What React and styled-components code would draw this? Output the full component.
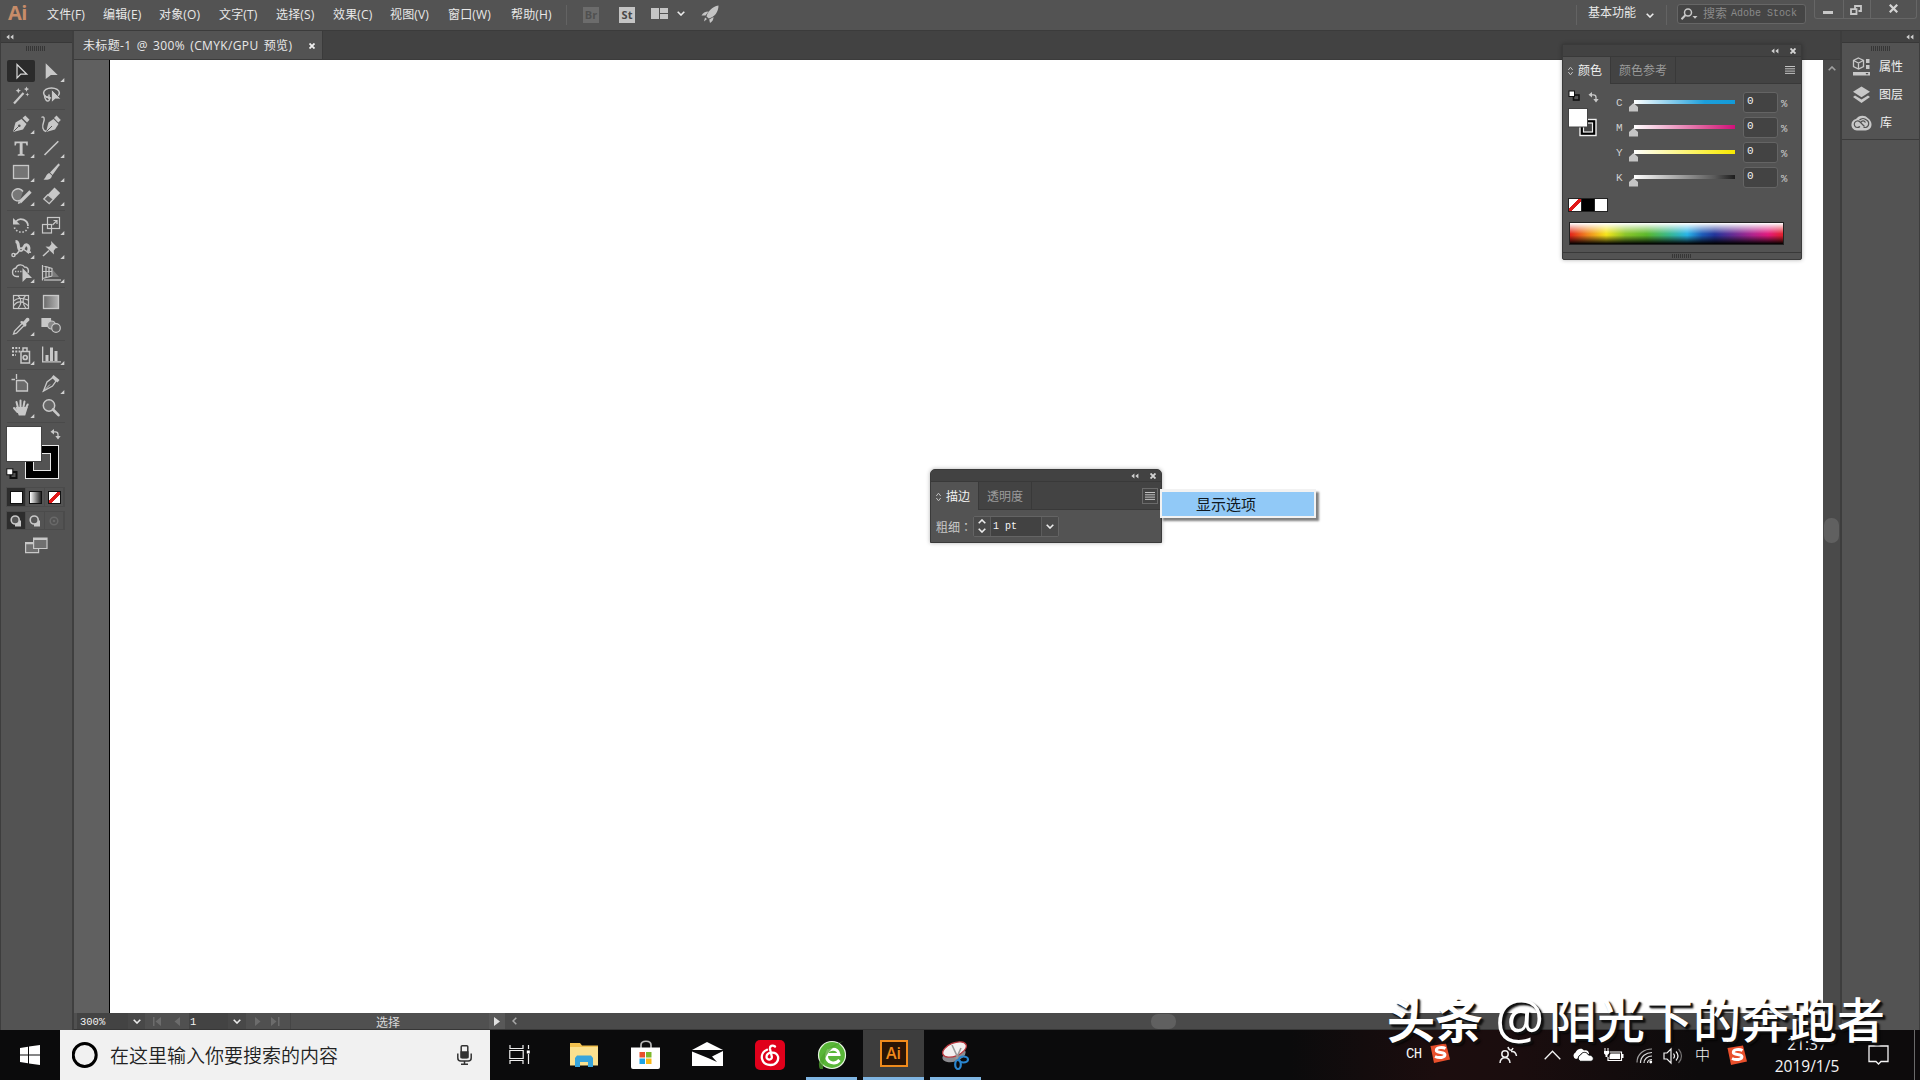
import React from "react";
import styled, { createGlobalStyle } from "styled-components";

const UI = '"Open Sans", "Noto Sans CJK SC", sans-serif';
const MONO = '"Liberation Mono", "Noto Sans CJK SC", monospace';

const Global = createGlobalStyle`
  * { box-sizing: border-box; }
  body { margin: 0; background: #424242; overflow: hidden; }
  svg { display: block; flex: none; }
`;

const Screen = styled.div`
  position: relative;
  width: 1920px;
  height: 1080px;
  display: flex;
  flex-direction: column;
  overflow: hidden;
  font: 12px/16px ${UI};
  color: #e8e8e8;
  background: #424242;
  white-space: nowrap;
`;

/* ---------- menu bar ---------- */
const MenuBar = styled.header`
  height: 31px;
  flex: none;
  display: flex;
  align-items: flex-start;
  background: #535353;
  border-bottom: 1px solid #3b3b3b;
`;
const AiLogo = styled.div`
  width: 47px;
  padding: 1px 0 0 8px;
  font: 700 20px/24px "Open Sans", sans-serif;
  color: #c78c69;
  letter-spacing: -0.6px;
`;
const MenuItem = styled.div`
  width: ${(p) => p.$w}px;
  padding-top: 7px;
  letter-spacing: 0.15px;
`;
const BarLine = styled.div`
  width: 1px;
  height: 20px;
  margin-top: 5px;
  background: #636363;
`;
const AppBadge = styled.div`
  width: 16px;
  height: 16px;
  margin: 7px 0 0 ${(p) => p.$left}px;
  background: ${(p) => (p.$dim ? "#6c6c6c" : "#c4c4c4")};
  color: ${(p) => (p.$dim ? "#505050" : "#484848")};
  font: 700 11px/16px "Open Sans", sans-serif;
  text-align: center;
`;
const BarIcon = styled.div`
  margin: ${(p) => p.$top}px 0 0 ${(p) => p.$left}px;
`;
const Workspace = styled.div`
  margin-left: auto;
  display: flex;
`;
const WorkspaceName = styled.div`
  padding: 5px 0 0 11px;
  width: 69px;
`;
const StockSearch = styled.div`
  display: flex;
  align-items: center;
  width: 129px;
  height: 20px;
  margin: 4px 8px 0 10px;
  padding-left: 3px;
  gap: 5px;
  background: #454545;
  border: 1px solid #666;
  border-radius: 3px;
  font: 10px/14px ${MONO};
  color: #8a8a8a;
`;
const StockText = styled.span`
  display: flex;
  align-items: center;
  gap: 4px;
  b { font: 12px/16px ${UI}; }
`;
const WinButtons = styled.div`
  display: flex;
  width: 103px;
  height: 19px;
  margin-right: 3px;
  border: 1px solid #666;
  border-top: 0;
  border-radius: 0 0 3px 3px;
`;
const WinButton = styled.div`
  width: ${(p) => p.$w}px;
  border-left: ${(p) => (p.$first ? 0 : 1)}px solid #666;
`;

/* ---------- main area ---------- */
const Main = styled.div`
  flex: 1;
  display: flex;
  min-height: 0;
`;
const Toolbox = styled.aside`
  width: 74px;
  display: flex;
  flex-direction: column;
  background: #535353;
  border-left: 1px solid #3d3d3d;
  border-right: 2px solid #3f3f3f;
`;
const DockHead = styled.div`
  height: 12px;
  flex: none;
  display: flex;
  align-items: center;
  justify-content: ${(p) => (p.$right ? "flex-end" : "flex-start")};
  padding: 0 5px 0 5px;
  background: #424242;
  border-bottom: 1px solid #383838;
`;
const Grip = styled.div`
  width: 20px;
  height: ${(p) => p.$h || 5}px;
  margin: ${(p) => p.$m};
  flex: none;
  background: repeating-linear-gradient(90deg, #363636 0 1px, #535353 1px 2px);
`;
const ToolGroup = styled.div`
  display: grid;
  grid-template-columns: 30px 30px;
  grid-auto-rows: 24px;
  margin-left: 5px;
  padding-bottom: ${(p) => p.$pad}px;
  background: linear-gradient(#4a4a4a, #4a4a4a) 1px calc(100% - 2px) / 58px 1px no-repeat;
`;
const FillStrokeWrap = styled.div`
  margin-left: 4px;
`;
const ModeRow = styled.div`
  display: flex;
  width: 59px;
  height: ${(p) => p.$h}px;
  margin: ${(p) => p.$top}px 0 0 5px;
  border: 1px solid #4b4b4b;
`;
const ModeCell = styled.div`
  flex: 1;
  display: flex;
  align-items: center;
  justify-content: center;
  background: ${(p) => (p.$on ? "#2d2d2d" : "transparent")};
  border-right: 1px solid #4b4b4b;
`;
const ModeSwatch = styled.div`
  width: 13px;
  height: 13px;
  border: 1px solid #111;
  background: ${(p) => p.$bg};
`;
const ScreenMode = styled.div`
  margin: 7px 0 0 24px;
`;

const Doc = styled.section`
  flex: 1;
  display: flex;
  flex-direction: column;
  min-width: 0;
`;
const TabBar = styled.div`
  height: 29px;
  flex: none;
  background: #424242;
  border-bottom: 1px solid #3b3b3b;
`;
const Tab = styled.div`
  display: flex;
  align-items: center;
  width: 249px;
  height: 28px;
  padding: 1px 7px 0 9px;
  justify-content: space-between;
  background: #535353;
  border-right: 1px solid #3b3b3b;
  letter-spacing: 0.35px;
  word-spacing: 1.8px;
`;
const CanvasRow = styled.div`
  flex: 1;
  display: flex;
`;
const Pasteboard = styled.div`
  width: 36px;
  background: #606060;
  border-right: 1px solid #000;
`;
const Artboard = styled.div`
  flex: 1;
  background: #fff;
`;
const VScroll = styled.div`
  width: 17px;
  display: flex;
  flex-direction: column;
  align-items: center;
  padding-top: 6px;
  background: #4a4a4a;
`;
const Thumb = styled.div`
  width: ${(p) => p.$w}px;
  height: ${(p) => p.$h}px;
  border-radius: 7px;
  background: #606060;
  margin: ${(p) => p.$m};
`;
const StatusBar = styled.footer`
  height: 17px;
  flex: none;
  display: flex;
  align-items: center;
  background: #505050;
  border-bottom: 1px solid #363636;
  font: 10px/16px ${MONO};
`;
const StatusField = styled.div`
  width: ${(p) => p.$w}px;
  height: 16px;
  padding-left: ${(p) => p.$pad}px;
  background: #434343;
  color: #f2f2f2;
  font: 10.5px/18px "Liberation Mono", monospace;
`;
const StatusCell = styled.div`
  width: ${(p) => p.$w}px;
  height: 16px;
  display: flex;
  align-items: center;
  justify-content: center;
  background: ${(p) => p.$bg || "transparent"};
`;
const StatusLabel = styled.div`
  width: 199px;
  padding: 4px 0 0 85px;
  height: 16px;
  border-left: 1px solid #464646;
  font: 12px/12px ${UI};
  color: #d8d8d8;
`;
const HScroll = styled.div`
  flex: 1;
  height: 16px;
  display: flex;
  align-items: center;
  padding-left: 7px;
  background: #4a4a4a;
`;

/* ---------- right dock ---------- */
const Dock = styled.aside`
  width: 80px;
  background: #535353;
  border-left: 2px solid #3d3d3d;
  border-right: 1px solid #3d3d3d;
`;
const DockItems = styled.div`
  height: 97px;
  padding-top: 3px;
  border-bottom: 1px solid #3b3b3b;
`;
const DockItem = styled.div`
  height: 28px;
  display: flex;
  align-items: center;
  gap: 8px;
  padding-left: 9px;
  color: #f0f0f0;
`;

/* ---------- floating panels ---------- */
const Panel = styled.section`
  position: absolute;
  left: ${(p) => p.$x}px;
  top: ${(p) => p.$y}px;
  width: ${(p) => p.$w}px;
  height: ${(p) => p.$h}px;
  display: flex;
  flex-direction: column;
  background: #535353;
  border: 1px solid #3a3a3a;
  border-radius: ${(p) => p.$r || "2px"};
  box-shadow: 0 0 4px rgba(0, 0, 0, 0.3);
  overflow: hidden;
`;
const PanelHead = styled.div`
  height: 12px;
  flex: none;
  display: flex;
  align-items: center;
  justify-content: flex-end;
  gap: 11px;
  padding: 1px 5px 0 0;
  background: #424242;
  border-bottom: 1px solid #393939;
`;
const PanelTabs = styled.div`
  height: ${(p) => p.$h}px;
  flex: none;
  display: flex;
  background: #434343;
`;
const PanelTab = styled.div`
  display: flex;
  align-items: center;
  width: ${(p) => p.$w}px;
  padding: ${(p) => (p.$on ? 1 : 2)}px 0 0 ${(p) => (p.$on ? 5 : 8)}px;
  gap: 5px;
  background: ${(p) => (p.$on ? "#535353" : "transparent")};
  color: ${(p) => (p.$on ? "#f0f0f0" : "#9b9b9b")};
  border-right: 1px solid #393939;
  border-bottom: ${(p) => (p.$on ? 0 : 1)}px solid #393939;
`;
const PanelMenu = styled.div`
  flex: 1;
  display: flex;
  align-items: center;
  justify-content: flex-end;
  padding-right: ${(p) => p.$pad}px;
  border-bottom: 1px solid #393939;
`;
const MenuBox = styled.div`
  padding: 3px 2px;
  border: 1px solid #6a6a6a;
`;
const ColorBody = styled.div`
  height: 112px;
  display: flex;
  padding: 5px 0 0 5px;
`;
const Sliders = styled.div`
  display: flex;
  flex-direction: column;
  margin-left: 13px;
  padding-top: 1px;
`;
const SliderRow = styled.div`
  height: 25px;
  display: flex;
  align-items: center;
  font: 10.5px/14px "Liberation Mono", monospace;
  color: #d0d0d0;
`;
const SliderLabel = styled.span`
  width: 14px;
  padding: 1px 0 0 1px;
  font-size: 11px;
`;
const Percent = styled.span`
  padding-top: 2px;
`;
const SliderTrack = styled.div`
  width: 107px;
  height: 25px;
  padding: 10px 0 0 5px;
`;
const TrackFill = styled.div`
  width: 101px;
  height: 4px;
  background: ${(p) => p.$bg};
`;
const TrackKnob = styled.svg`
  margin: -1px 0 0 -5px;
`;
const NumberBox = styled.div`
  width: 35px;
  height: 21px;
  margin: 0 3px 0 7px;
  padding: 1px 0 0 3px;
  background: #434343;
  border: 1px solid #646464;
  border-radius: 3px;
  font: 11px/14px "Liberation Mono", monospace;
  color: #f2f2f2;
`;
const QuickSwatches = styled.div`
  display: flex;
  width: 40px;
  height: 14px;
  margin: 2px 0 10px 5px;
  border: 1px solid #222;
`;
const QuickSwatch = styled.div`
  flex: 1;
  border-right: 1px solid #222;
  background: ${(p) => p.$bg};
  &:last-child { border-right: 0; }
`;
const Spectrum = styled.div`
  width: 215px;
  height: 23px;
  margin-left: 6px;
  border: 1px solid #222;
  background:
    linear-gradient(180deg, #fff 0%, rgba(255, 255, 255, 0.6) 20%, rgba(255, 255, 255, 0) 52%, rgba(0, 0, 0, 0) 58%, rgba(0, 0, 0, 0.5) 80%, #000 100%),
    linear-gradient(90deg, #e2231a 0%, #f0861f 8%, #f5e51b 17%, #8cc62a 26%, #5cb92c 36%, #3ab88a 46%, #28b4e8 55%, #1d5cb8 62%, #23349a 68%, #6a2c94 77%, #b2248e 86%, #e3197c 93%, #e3202b 100%);
`;
const PanelFoot = styled.div`
  margin-top: auto;
  height: 7px;
  border-top: 1px solid #393939;
  display: flex;
  justify-content: center;
`;
const StrokeBody = styled.div`
  flex: 1;
  display: flex;
  align-items: center;
  padding-left: 5px;
  color: #c8c8c8;
`;
const StrokeLabel = styled.span`
  padding-top: 2px;
  font-family: "Noto Sans CJK TC", "Noto Sans CJK SC", sans-serif;
`;
const StrokeField = styled.div`
  display: flex;
  width: 86px;
  height: 21px;
  margin-left: 1px;
  border: 1px solid #646464;
  border-radius: 2px;
`;
const SpinBox = styled.div`
  width: ${(p) => p.$w}px;
  display: flex;
  flex-direction: column;
  align-items: center;
  justify-content: center;
  gap: 4px;
  background: #4a4a4a;
`;
const StrokeValue = styled.div`
  width: 52px;
  padding: 2px 0 0 2px;
  background: #424242;
  border: solid #5c5c5c;
  border-width: 0 1px;
  font: 10px/16px "Liberation Mono", monospace;
  color: #f5f5f5;
`;
const Popup = styled.div`
  position: absolute;
  left: 1160px;
  top: 489px;
  width: 156px;
  height: 29px;
  padding: 3px 2px 2px;
  background: #f2f2f2;
  box-shadow: 3px 3px 2px rgba(0, 0, 0, 0.5);
`;
const PopupItem = styled.div`
  height: 24px;
  padding-left: 34px;
  background: #91c9f7;
  color: #101820;
  font: 15px/24px "Noto Sans CJK SC", sans-serif;
`;

/* ---------- task bar ---------- */
const Taskbar = styled.nav`
  height: 50px;
  flex: none;
  display: flex;
  background: linear-gradient(90deg, #0b0b0c 0 1290px, #1c0d0e 1440px, #1a0d0e 1520px, #0d0b0c 1700px);
`;
const TaskCell = styled.div`
  width: ${(p) => p.$w}px;
  height: 50px;
  display: flex;
  justify-content: center;
  padding-top: ${(p) => p.$top || 10}px;
  background: ${(p) => (p.$active ? "#3d3d3d" : "transparent")};
  border-bottom: ${(p) => (p.$run ? 3 : 0)}px solid #7fb5e2;
`;
const Gap = styled.div`
  width: ${(p) => p.$w}px;
  flex: none;
`;
const SearchBox = styled.div`
  width: 430px;
  height: 50px;
  display: flex;
  align-items: center;
  padding-left: 12px;
  background: #f1f1f1;
  color: #222;
  font: 19px/26px "Noto Sans CJK SC", sans-serif;
`;
const SearchText = styled.span`
  width: 359px;
  padding-left: 12px;
  font-weight: 350;
`;
const AiTile = styled.div`
  width: 28px;
  height: 27px;
  border: 2px solid #f08a1c;
  background: #2a1405;
  color: #f08a1c;
  font: 600 16px/22px "Open Sans", sans-serif;
  text-align: center;
`;
const Tray = styled.div`
  margin-left: auto;
  width: 514px;
  display: flex;
  color: #f4f4f4;
`;
const TrayIcon = styled.div`
  width: ${(p) => p.$w}px;
  flex: none;
  padding-top: ${(p) => p.$top}px;
`;
const Lang = styled.div`
  width: 24px;
  padding-top: 15px;
  font: 14px/18px "Liberation Mono", monospace;
  letter-spacing: -0.6px;
`;
const ImeMode = styled.div`
  width: 32px;
  padding-top: 14px;
  font: 300 15px/20px "Noto Sans CJK SC", sans-serif;
`;
const Clock = styled.div`
  width: 107px;
  padding: 3px 15px 0 0;
  text-align: center;
  font: 15.5px/22px "Open Sans", sans-serif;
`;
const Edge = styled.div`
  width: 1px;
  height: 50px;
  margin-left: auto;
  margin-right: 5px;
  background: #6a6a6a;
`;
const Watermark = styled.div`
  position: absolute;
  left: 1387px;
  top: 982px;
  display: flex;
  align-items: baseline;
  color: #fff;
  font: 500 48px/70px "Noto Sans CJK SC", sans-serif;
  text-shadow: 2px 2px 1px #111, 3px 3px 2px rgba(0, 0, 0, 0.7);
`;
const WatermarkBrand = styled.b`
  font-weight: 700;
  margin-right: 11px;
`;
const WatermarkAt = styled.span`
  width: 55px;
  padding-left: 1px;
  font: 400 55px/60px "Open Sans", sans-serif;
`;

/* ---------- small glyphs ---------- */
const Rewind = ({ c = "#cfcfcf" }) => (
  <svg width="8" height="6" viewBox="0 0 8 6" fill={c}><path d="M3.4.4v5.200L.3 3zM7.400.4v5.200L4.300 3z" /></svg>
);
const Cross = ({ s = 6, w = 2, c = "#d4d4d4" }) => (
  <svg width={s} height={s} viewBox="0 0 6 6"><path d="M.5.5l5 5M5.5.5l-5 5" stroke={c} strokeWidth={w} /></svg>
);
const Chevron = ({ w = 8, h = 5, up, c = "#ececec", s = 1.6 }) => (
  <svg width={w} height={h} viewBox="0 0 8 5"><path d={up ? "M.7 4.3L4 1l3.3 3.3" : "M.7.7L4 4 7.3.7"} fill="none" stroke={c} strokeWidth={s} /></svg>
);
const Lines = () => (
  <svg width="10" height="8" viewBox="0 0 10 8"><path d="M0 .5h10M0 2.8h10M0 5.1h10M0 7.4h10" stroke="#c2c2c2" /></svg>
);
const Sort = () => (
  <svg width="5" height="10" viewBox="0 0 5 10"><path d="M.3 4L2.5 1.2 4.7 4M.3 6l2.2 2.8L4.7 6" fill="none" stroke="#c0c0c0" /></svg>
);
const SwapArrows = () => (
  <g fill="none" stroke="#c8c8c8" strokeWidth="1.300"><path d="M2.500 2.800H5Q7.500 2.800 7.500 5.300V8" /><path d="M0 2.800L3.500 0v5.600zM7.500 10.500L4.800 7h5.400z" fill="#c8c8c8" stroke="none" /></g>
);

const G = "#c8c8c8";
const icons = {
  select: <path d="M11 4.500v13.500l3.800-3.800h6z" fill="none" stroke="#d8d8d8" strokeWidth="1.2" />,
  direct: <path d="M9.700 3.300v15.700l5.200-4h6.800z" fill={G} />,
  wand: <g><path d="M8 19.500L17.500 9" stroke={G} strokeWidth="2.2" /><path d="M12.300 4l.8 1.800 1.900.9-1.900.8-.8 1.900-.8-1.900-1.800-.8 1.800-.9zM20.500 2.500l.8 1.800 1.800.8-1.800.8-.8 1.800-.8-1.800-1.800-.8 1.800-.8zM21.300 8.500l.6 1.400 1.400.6-1.400.6-.6 1.300-.5-1.300-1.400-.6 1.400-.6z" fill={G} /></g>,
  lasso: <g fill="none" stroke={G} strokeWidth="1.5"><ellipse cx="15.500" cy="9" rx="7.900" ry="5" /><path d="M8.500 11c0 5 3 7 4.500 5.500s-1-4.500-3-3" /><path d="M13 10.500v4" /><path d="M15.500 5.500v13l3.800-3.500H25z" fill={G} stroke="#535353" strokeWidth=".8" /></g>,
  pen: <g fill={G}><path d="M7 20L9.500 10.500l6-3.500 5 5-3.500 5.500z" /><path d="M16.500 6l2.800-2.500 4.200 4.300-2.500 2.700z" /><path d="M7.500 19.500l5-5" stroke="#535353" /><circle cx="13.300" cy="13.700" r="1.300" fill="#535353" /></g>,
  curve: <g fill={G}><path d="M10 20l2.500-9.500 5-3.500 5 5-3.500 5.500z" /><path d="M18 6l2.500-2.500L24.800 8l-2.500 2.500z" /><path d="M10.500 19.500l5.500-5.500" stroke="#535353" /><path d="M5.500 5.500c2.500-2 3.500 1 2 5s-1 8 2.500 9" fill="none" stroke={G} strokeWidth="1.400" /></g>,
  type: <path d="M8.500 5.500h13.300v4h-1.300l-.7-2.200h-3.200v10.600l2 .6v1.200h-6.900v-1.200l2-.6V7.300h-3.200l-.7 2.200H8.500z" fill={G} />,
  line: <path d="M8.500 19L22.300 5.300" stroke={G} strokeWidth="1.600" />,
  rect: <rect x="7.500" y="5.500" width="15" height="13" fill="#747474" stroke={G} strokeWidth="1.300" />,
  brush: <g fill={G}><path d="M14 12.500L22.500 3.500q1.500.3 1 1.700L16.500 15z" /><path d="M13.200 13l2.800 2.500c-.5 4-4.500 4.800-8.500 4 2.500-1.500 2.500-5.500 5.700-6.500z" /></g>,
  shaper: <g><path d="M17 7.500a6 6 0 1 0-3 9" fill="#777" stroke={G} strokeWidth="1.500" /><path d="M14 18l10.500-10.500" stroke={G} strokeWidth="3.200" /><path d="M11.800 20l.8-3 2.500 2z" fill={G} /></g>,
  eraser: <g><path d="M11.800 10.500L18.500 3.500l5.700 5.500-6.700 7z" fill={G} /><path d="M11.800 10.800l-4 4.200 5.400 4.700 4.200-4.400z" fill="#606060" stroke={G} strokeWidth="1.300" /></g>,
  rotate: <g fill="none" stroke={G} strokeWidth="1.700"><path d="M10 8.500c4-5 12-1.500 12 4.500" /><path d="M22 14c-2 8-13 6-14-1" strokeDasharray="1.500 1.800" /><path d="M7 5v6.500h7z" fill={G} stroke="none" /></g>,
  scale: <g fill="none" stroke={G} strokeWidth="1.200"><rect x="11.500" y="4.500" width="12" height="11" /><rect x="6.500" y="11.500" width="9" height="8.500" /><path d="M16.500 12l4.500-4.500M17.500 7.500H21v3.500" /></g>,
  warp: <g fill="none" stroke={G} strokeWidth="1.400"><path d="M9.500 4.500c5 0 1 8 5 8.500s3-6.500 6.500-5c3 1.500 2 6 .5 8" strokeWidth="3" /><path d="M8 18c5-1 5-5 7-6.500s5 5 10 3.500" /><circle cx="7.500" cy="18" r="1.600" /><circle cx="15" cy="12.500" r="1.500" fill="#535353" /></g>,
  pin: <g fill={G}><path d="M15 4l7 7-2.300.3-2 2.500.3 3.700L9.500 9.500l3.700.2 2.200-2.700z" /><path d="M13 13.500l-6 5.500" stroke={G} strokeWidth="1.500" /></g>,
  builder: <g fill="none" stroke={G} strokeWidth="1.400"><path d="M13 15.500H10.500a4.300 4.300 0 0 1-.5-8.500c1-4 7-4 8.500-1 3.500 0 4.500 3 3.500 6" /><path d="M9 10.500h9" strokeDasharray="1.300 1.300" /><path d="M16.500 7v14l4-4h5.500z" fill={G} stroke="none" /></g>,
  perspective: <g fill="none" stroke={G} strokeWidth="1.200"><path d="M6.500 4v15.500M6.500 4.500L16 7.500v7.500L6.500 17.500M10 5.500v11M13 6.500v9M6.500 10.500H16" /><path d="M8 19h17" /><path d="M17 9v7h6z" fill="#7a7a7a" stroke="none" /></g>,
  mesh: <g fill="none" stroke={G} strokeWidth="1.200"><rect x="7.500" y="5.500" width="15" height="13" /><path d="M7.500 11c5-4 8-3 15-1M7.500 16c4-6 9-5 15 0M12 5.500c4 4 4 8 0 13M19.500 5.500c-3 3-3 8 .5 13" /></g>,
  gradient: <g><defs><linearGradient id="tg"><stop stopColor="#6a6a6a" /><stop offset="1" stopColor="#b4b4b4" /></linearGradient></defs><rect x="7.500" y="5.500" width="15" height="13" fill="url(#tg)" stroke={G} strokeWidth="1.300" /></g>,
  dropper: <g><path d="M16 9.500L8.500 17l-1 3 3-.8L18 11.500" fill="none" stroke={G} strokeWidth="1.300" /><path d="M14 8l1.500-1 2 .500 3-3.500q3-1 3 2.200l-3.300 3.300.3 1.800-1.500 1.700z" fill={G} /></g>,
  blend: <g stroke={G} strokeWidth="1.200"><path d="M6 4.500h8.500v3.500l-3 4.500H6z" fill={G} /><circle cx="15.500" cy="11" r="4" fill="#888" /><circle cx="20" cy="14" r="4.300" fill="#606060" /></g>,
  spray: <g fill="none" stroke={G} strokeWidth="1.500"><rect x="15" y="8.500" width="8.500" height="11.500" /><path d="M17 8.500V5h4v3.500" /><circle cx="19.200" cy="14.500" r="2" strokeWidth="1.700" /><path d="M6 5h8M6 8.500h8M6 12h4" strokeDasharray="2 1.300" strokeWidth="2" /></g>,
  chart: <path d="M6 3.500h1.300v14.700H25v1.300H6zM9.500 12h3v6h-3zM14 4.500h3v13.500h-3zM18.500 8h3v10h-3z" fill={G} />,
  artboard: <g fill="none" stroke={G} strokeWidth="1.300"><path d="M10.500 2v5M5.500 7.500h3.500" /><path d="M10.500 8.500h8l3 3v7.500h-11z" fill="#6a6a6a" /></g>,
  slice: <g><path d="M7.500 19l3.500-9 6-4.500 3 3.500-3.500 5z" fill="none" stroke={G} strokeWidth="1.300" /><path d="M15.500 5.500l2-2.500 6 5-2 2.500z" fill={G} /><path d="M7 19.500l7-7" stroke={G} /></g>,
  hand: <g stroke={G} strokeLinecap="round" fill="none" strokeWidth="2"><path d="M12 12L10.500 6M14.500 11V4.500M17.300 11.500L18.500 5.500M19.500 13l2.200-4.500M11.500 16L8 12" /><path d="M11 12h9.500l-2 6.500h-5z" fill={G} /></g>,
  zoom: <g fill="none" stroke={G}><circle cx="13" cy="9.500" r="5.700" fill="#666" strokeWidth="1.500" /><path d="M17 13.500l5.500 5.700" strokeWidth="2.600" strokeLinecap="round" /></g>,
};
const groups = [
  [["select", 0], ["direct", 1], ["wand", 0], ["lasso", 0]],
  [["pen", 1], ["curve", 0], ["type", 1], ["line", 1], ["rect", 1], ["brush", 1], ["shaper", 1], ["eraser", 1]],
  [["rotate", 1], ["scale", 1], ["warp", 1], ["pin", 1], ["builder", 1], ["perspective", 1]],
  [["mesh", 0], ["gradient", 0], ["dropper", 1], ["blend", 0]],
  [["spray", 1], ["chart", 1]],
  [["artboard", 0], ["slice", 1], ["hand", 1], ["zoom", 0]],
];
const Tool = ({ name, more }) => (
  <svg width="30" height="24" viewBox="0 0 30 24">
    {name === "select" && <rect x="1" y="0" width="28" height="22" rx="2" fill="#2b2b2b" />}
    {icons[name]}
    {more ? <path d="M28.300 18v4h-4z" fill="#d0d0d0" /> : null}
  </svg>
);

const FillStroke = () => (
  <svg width="60" height="56" viewBox="0 0 60 56">
    <rect x="20.500" y="20.500" width="33" height="33" fill="#000" stroke="#e8e8e8" />
    <rect x="28.500" y="28.500" width="17" height="17" fill="#535353" stroke="#e8e8e8" />
    <rect x="1.500" y="1.500" width="35" height="35" fill="#fff" stroke="#444" strokeWidth="1" />
    <g transform="translate(45.500 4)"><SwapArrows /></g>
    <rect x="5.500" y="47" width="6" height="6" fill="none" stroke="#111" strokeWidth="2" />
    <rect x="1.800" y="43.800" width="6" height="6" fill="#fff" stroke="#111" />
  </svg>
);
const ModeGlyph = ({ c, f }) => (
  <svg width="12" height="12" viewBox="0 0 12 12"><rect x="5" y="5.500" width="6" height="6" fill={f} /><circle cx="5.200" cy="5" r="4" fill="#555" stroke={c} strokeWidth="1.600" /></svg>
);
const ModeGlyphOff = () => (
  <svg width="10" height="10" viewBox="0 0 10 10"><circle cx="5" cy="5" r="3.800" fill="none" stroke="#696969" strokeWidth="1.500" /><circle cx="5" cy="5" r="1.300" fill="#696969" /></svg>
);
const ColorPair = () => (
  <svg width="34" height="52" viewBox="0 0 34 52">
    <rect x="5.500" y="6" width="5.500" height="5" fill="none" stroke="#111" strokeWidth="1.600" />
    <rect x="1" y="2" width="5.500" height="5.500" fill="#fff" stroke="#111" />
    <g transform="translate(20.500 3)"><SwapArrows /></g>
    <rect x="12" y="30.500" width="16" height="16" fill="#000" stroke="#f0f0f0" strokeWidth="1.400" />
    <rect x="15.500" y="34" width="9" height="9" fill="#444" stroke="#f0f0f0" strokeWidth="1.200" />
    <rect x="0.500" y="19.500" width="19" height="18.500" fill="#fff" stroke="#444" />
  </svg>
);

const Sogou = () => (
  <svg width="21" height="21" viewBox="0 0 21 21">
    <path d="M.5 3L16 .500l4 16L4 20z" fill="#e9502c" />
    <path d="M15.500 5.600C12.500 3.800 6 4.300 6.300 7.500c.3 2.800 8.700 1.200 8.700 4.300 0 3-6 3.500-10 1.700" fill="none" stroke="#fff" strokeWidth="2.900" />
  </svg>
);

const NONE = "linear-gradient(135deg, #fff 0 40%, #e01818 40% 60%, #fff 60%)";

const menus = [["文件(F)", 56], ["编辑(E)", 56], ["对象(O)", 60], ["文字(T)", 57], ["选择(S)", 57], ["效果(C)", 57], ["视图(V)", 58], ["窗口(W)", 63], ["帮助(H)", 55]];
const channels = [
  ["C", "linear-gradient(90deg,#fff,#1d9fdb 70%,#129ad8)"],
  ["M", "linear-gradient(90deg,#fff,#dc4c92 75%,#d0107a)"],
  ["Y", "linear-gradient(90deg,#fff,#fbf03a 75%,#f6e800)"],
  ["K", "linear-gradient(90deg,#fff,#595959 80%,#1c1c1c)"],
];

export default function App() {
  return (
    <Screen>
      <Global />
      <MenuBar>
        <AiLogo>Ai</AiLogo>
        {menus.map(([t, w]) => <MenuItem key={t} $w={w}>{t}</MenuItem>)}
        <BarLine />
        <AppBadge $left={16} $dim>Br</AppBadge>
        <AppBadge $left={20}>St</AppBadge>
        <BarIcon $top={8} $left={16}>
          <svg width="17" height="11" viewBox="0 0 17 11"><path d="M0 0h8v11H0zM9 0h8v5H9zM9 6h8v5H9z" fill="#c6c6c6" /></svg>
        </BarIcon>
        <BarIcon $top={11} $left={9}><Chevron /></BarIcon>
        <BarIcon $top={5} $left={16}>
          <svg width="18" height="18" viewBox="0 0 18 18" fill="#c4c4c4"><path d="M17.500.500C11 1.500 6.500 7 5.500 11.500l2.300 2C13.500 12 17.500 7 17.500.500zM7.500 6.500C4 6.500 2 8 .500 10.500h4zM12.500 12c0 2.500-1 4.500-3.500 6l-.8-3.500zM4 12.500l2 1.500-3 2.500z" /></svg>
        </BarIcon>
        <Workspace>
          <BarLine />
          <WorkspaceName>基本功能</WorkspaceName>
          <BarIcon $top={13} $left={0}><Chevron /></BarIcon>
          <Gap $w={12} />
          <BarLine />
          <StockSearch>
            <svg width="17" height="12" viewBox="0 0 17 12"><circle cx="7" cy="4.500" r="3.500" fill="none" stroke={G} strokeWidth="1.500" /><path d="M4.500 7L.500 11.200" stroke={G} strokeWidth="2" /><path d="M11.500 8h5l-2.500 2.700z" fill={G} /></svg>
            <StockText><b>搜索</b>Adobe Stock</StockText>
          </StockSearch>
          <WinButtons>
            <WinButton $w={28} $first><BarIcon $top={11} $left={8}><svg width="10" height="3"><rect width="10" height="3" fill={G} /></svg></BarIcon></WinButton>
            <WinButton $w={27}><BarIcon $top={5} $left={6}><svg width="12" height="10" viewBox="0 0 12 10" fill="none" stroke={G} strokeWidth="1.800"><path d="M5 3.500V1h6v5H8.500M1 4.200h5.500V9H1z" /></svg></BarIcon></WinButton>
            <WinButton $w={46}><BarIcon $top={4} $left={18}><Cross s={9} w={1.5} /></BarIcon></WinButton>
          </WinButtons>
        </Workspace>
      </MenuBar>

      <Main>
        <Toolbox>
          <DockHead><Rewind /></DockHead>
          <Grip $m="3px 0 9px 25px" />
          {groups.map((g, i) => (
            <ToolGroup key={i} $pad={i === 0 ? 4 : 5}>
              {g.map(([n, m]) => <Tool key={n} name={n} more={m} />)}
            </ToolGroup>
          ))}
          <FillStrokeWrap><FillStroke /></FillStrokeWrap>
          <ModeRow $h={20} $top={6}>
            <ModeCell $on><ModeSwatch $bg="#fff" /></ModeCell>
            <ModeCell><ModeSwatch $bg="linear-gradient(90deg,#fff,#222)" /></ModeCell>
            <ModeCell><ModeSwatch $bg={NONE} /></ModeCell>
          </ModeRow>
          <ModeRow $h={19} $top={4}>
            <ModeCell $on><ModeGlyph c={G} f={G} /></ModeCell>
            <ModeCell><ModeGlyph c={G} f={G} /></ModeCell>
            <ModeCell><ModeGlyphOff /></ModeCell>
          </ModeRow>
          <ScreenMode>
            <svg width="23" height="17" viewBox="0 0 23 17" fill="#707070" stroke={G} strokeWidth="1.200"><path d="M.600 5.600h13v10h-13z" /><path d="M8.600 1h13.400v10.500H8.600z" /><path d="M8.600 2h13.400M.600 6.200h8" strokeWidth="2" /></svg>
          </ScreenMode>
        </Toolbox>

        <Doc>
          <TabBar><Tab>未标题-1 @ 300% (CMYK/GPU 预览)<Cross w={1.8} c="#f0f0f0" /></Tab></TabBar>
          <CanvasRow>
            <Pasteboard />
            <Artboard />
            <VScroll>
              <Chevron up c="#a0a0a0" />
              <Thumb $w={15} $h={25} $m="447px 0 0 0" />
            </VScroll>
          </CanvasRow>
          <StatusBar>
            <Gap $w={3} />
            <StatusField $w={51} $pad={3}>300%</StatusField>
            <StatusCell $w={17} $bg="#484848"><Chevron /></StatusCell>
            <StatusCell $w={44}>
              <svg width="28" height="9" viewBox="0 0 28 9" fill="#6c6c6c"><path d="M0 0h1.500v9H0zM8 0v9L2.500 4.500zM27 0v9l-5.500-4.500z" /></svg>
            </StatusCell>
            <StatusField $w={39} $pad={1}>1</StatusField>
            <StatusCell $w={18} $bg="#484848"><Chevron /></StatusCell>
            <StatusCell $w={44}>
              <svg width="26" height="9" viewBox="0 0 26 9" fill="#6c6c6c"><path d="M0 0v9l5.500-4.500zM16 0v9l5.500-4.500zM23 0h1.500v9H23z" /></svg>
            </StatusCell>
            <StatusLabel>选择</StatusLabel>
            <StatusCell $w={16} $bg="#585858"><svg width="6" height="9" viewBox="0 0 6 9"><path d="M0 0l6 4.500L0 9z" fill="#e0e0e0" /></svg></StatusCell>
            <HScroll>
              <svg width="5" height="8" viewBox="0 0 5 8"><path d="M4.300.700L1 4l3.300 3.300" fill="none" stroke="#a8a8a8" strokeWidth="1.500" /></svg>
              <Thumb $w={25} $h={15} $m="0 0 0 634px" />
            </HScroll>
          </StatusBar>
        </Doc>

        <Dock>
          <DockHead $right><Rewind /></DockHead>
          <DockItems>
            <Grip $m="0 0 2px 29px" />
            <DockItem>
              <svg width="20" height="20" viewBox="0 0 20 20" fill="none" stroke={G} strokeWidth="1.300"><path d="M7.500 1l5 2.300v6.200L7.500 12l-5-2.500V3.300zM2.500 3.500l5 2.500 5-2.500M7.500 6v6" /><path d="M15 2h3.500v4H15zM15 8h3.500v4H15zM2 15h17v3.500H2z" fill={G} stroke="none" /><path d="M14.500 16h3L16 17.700z" fill="#444" stroke="none" /></svg>
              属性
            </DockItem>
            <DockItem>
              <svg width="20" height="20" viewBox="0 0 20 20" fill={G}><path d="M10.500 1.500l8.500 5.300-8.500 5.400L2 6.800z" /><path d="M4 10.500l6.500 4 6.500-4 2 1.500-8.500 6L2 12z" /></svg>
              图层
            </DockItem>
            <DockItem>
              <svg width="21" height="20" viewBox="0 0 21 20" fill="none"><path d="M6 17.500C-1 17-1.500 7.500 5 6c2.500-4 9-4.500 12-.800 5.500 3.800 4.500 11.800-2.500 12.300z" fill={G} /><path d="M12.500 14.500h2a4 4 0 0 0 1-7.500c-2-2-5-2-7 0M6 14.500a3.300 3.300 0 1 1 2.800-5.700l4.700 4.700M6 14.500q2 0 3-1M10 9q2.500-2.500 4.500.500" stroke="#535353" strokeWidth="1.200" /></svg>
              库
            </DockItem>
          </DockItems>
        </Dock>
      </Main>

      <Taskbar>
        <TaskCell $w={60} $top={15}>
          <svg width="20" height="20" viewBox="0 0 20 20" fill="#fff"><path d="M0 3l8-1.200v7.700H0zM9 1.600L20 0v9.500H9zM0 10.500h8v7.700L0 17zM9 10.500h11V20L9 18.400z" /></svg>
        </TaskCell>
        <SearchBox>
          <svg width="26" height="28" viewBox="0 0 26 28"><circle cx="12.700" cy="14" r="11.500" fill="none" stroke="#000" strokeWidth="3" /></svg>
          <SearchText>在这里输入你要搜索的内容</SearchText>
          <svg width="15" height="20" viewBox="0 0 15 20" fill="none" stroke="#333" strokeWidth="1.500"><rect x="4.200" y=".800" width="6.600" height="12" rx="1" /><path d="M4.200 7h6.600v5.500H4.200z" fill="#333" /><path d="M.800 8.500v4.500q0 3 3 3h7.400q3 0 3-3V8.500M7.500 16v3M4 19.200h7" /></svg>
        </SearchBox>
        <Gap $w={19} />
        <TaskCell $w={22} $top={14}>
          <svg width="22" height="21" viewBox="0 0 22 21" fill="none" stroke="#f0f0f0" strokeWidth="1.200"><path d="M1 1v3.500h13V1M1 20v-3.500h13V20M.800 6.500h13.400v8H.800zM19.500 1v4M19.500 10v10" /><path d="M17.800 6.500h3v3h-3z" fill="#fff" stroke="none" /></svg>
        </TaskCell>
        <Gap $w={39} />
        <TaskCell $w={28} $top={13}>
          <svg width="28" height="24" viewBox="0 0 28 24"><path d="M0 0h10l2 2.500h16V22H0z" fill="#f2c14f" /><path d="M0 4h28v18.500H0z" fill="#fbe18f" /><path d="M5 24v-9l2-2.500h14l2 2.500v9h-5v-5h-8v5z" fill="#38a5dc" /></svg>
        </TaskCell>
        <Gap $w={33} />
        <TaskCell $w={29} $top={10}>
          <svg width="29" height="30" viewBox="0 0 29 30"><path d="M10 9V5c0-5 10-5 10 0v4" fill="none" stroke="#b8b8b8" strokeWidth="1.700" /><path d="M0 7.500h29V27q0 2-2 2H2q-2 0-2-2z" fill="#fff" /><path d="M8.500 12h5.500v5.500H8.500z" fill="#e8502c" /><path d="M15 12h5.500v5.500H15z" fill="#7db82c" /><path d="M8.500 18.500h5.500V24H8.500z" fill="#1ca3e6" /><path d="M15 18.500h5.500V24H15z" fill="#f8b818" /></svg>
        </TaskCell>
        <Gap $w={32} />
        <TaskCell $w={31} $top={12}>
          <svg width="31" height="25" viewBox="0 0 31 25" fill="#fff"><path d="M0 8L15 0l16 8H0z" /><path d="M0 9.500l16 6.500 9 4-5-5.500L31 9v15H0z" /></svg>
        </TaskCell>
        <Gap $w={32} />
        <TaskCell $w={30} $top={10}>
          <svg width="30" height="30" viewBox="0 0 30 30" fill="none" stroke="#fff" strokeWidth="2.300" strokeLinecap="round"><rect width="30" height="30" rx="5" fill="#e0001b" stroke="none" /><path d="M20 6.500c-2.500-2-5.500-.5-5 2.500l1.800 7.500c.7 4-5.300 4-5.300.5 0-5 9.500-6.500 11.500-.5 1 4.500-2.500 8.500-7.500 8.500C6 25 3.500 13.500 12 9.800" /></svg>
        </TaskCell>
        <Gap $w={21} />
        <TaskCell $w={51} $run $top={10}>
          <svg width="30" height="31" viewBox="0 0 30 31"><circle cx="15" cy="15" r="13.500" fill="#59b738" stroke="#e6f4df" strokeWidth="1.200" /><path d="M22.500 20c-4 5-13 3.500-13-4.500 0-8 12-8.500 12.500-1H10" fill="none" stroke="#fff" strokeWidth="3" /><path d="M3 29c-4-6 3-22 24-28C15 6 6 16 6 29z" fill="#4da62c" opacity=".75" /></svg>
        </TaskCell>
        <Gap $w={6} />
        <TaskCell $w={61} $run $active><AiTile>Ai</AiTile></TaskCell>
        <Gap $w={6} />
        <TaskCell $w={51} $run $top={11}>
          <svg width="30" height="30" viewBox="0 0 30 30"><ellipse cx="13" cy="14" rx="12" ry="6.500" transform="rotate(-18 13 14)" fill="#8c8c90" /><ellipse cx="13.500" cy="8.500" rx="12.500" ry="6.500" transform="rotate(-22 13.500 8.500)" fill="#f3f0f0" stroke="#b9383e" strokeWidth="1.300" /><path d="M11 4l6 13M20 7l-5 11" stroke="#999" strokeWidth="1.600" /><ellipse cx="22.500" cy="18.500" rx="4.500" ry="3" fill="none" stroke="#2a86cf" strokeWidth="2.200" /><ellipse cx="17" cy="23.500" rx="2.800" ry="4.500" fill="none" stroke="#2a86cf" strokeWidth="2.200" /></svg>
        </TaskCell>

        <Tray>
          <Lang>CH</Lang>
          <TrayIcon $w={69} $top={13}><Sogou /></TrayIcon>
          <TrayIcon $w={45} $top={16}>
            <svg width="19" height="18" viewBox="0 0 19 18" fill="none" stroke="#eee" strokeWidth="1.500"><circle cx="6" cy="8" r="3.200" /><path d="M1 17c.5-7 9.500-7 10 0" /><path d="M9 1c1 4 4 4 5 1M12 5.500c3-.5 5 1.500 5.500 4.500" /></svg>
          </TrayIcon>
          <TrayIcon $w={29} $top={20}><svg width="17" height="10" viewBox="0 0 17 10"><path d="M.700 9.200L8.500 1.300l7.800 7.900" fill="none" stroke="#f4f4f4" strokeWidth="1.300" /></svg></TrayIcon>
          <TrayIcon $w={30} $top={18}>
            <svg width="21" height="14" viewBox="0 0 21 14"><path d="M3 11a3.500 3.500 0 0 1-.5-6.500C4 .500 9-.500 11 2.500c3-1 5 1 5 3.500z" fill="#fff" /><path d="M7.500 13.300a3.300 3.300 0 0 1 0-6.300C9 3.500 14 3.500 15.500 7c3 0 4.800 1.500 4.800 3.500 0 1.500-1 2.800-3 2.800z" fill="#fff" stroke="#111" /></svg>
          </TrayIcon>
          <TrayIcon $w={33} $top={18}>
            <svg width="21" height="14" viewBox="0 0 21 14"><path d="M6.500 4h12v8.500H5V9" fill="none" stroke="#fff" strokeWidth="1.200" /><path d="M7.500 5.500h9.500v5.500H6.500V8z" fill="#fff" /><path d="M19 6h1.500v4H19zM1 3h5v2.500L4.500 7v2h-2V7L1 5.500zM1.500 0h1v3h-1zM4.500 0h1v3h-1z" fill="#fff" /></svg>
          </TrayIcon>
          <TrayIcon $w={27} $top={18}>
            <svg width="17" height="16" viewBox="0 0 17 16" fill="none" stroke="#ddd" strokeWidth="1.200"><path d="M1 14.500C1 6 8 1 16 1" opacity=".7" /><path d="M4.500 15C4.500 8.500 10 4.500 16 4.500M8 15c0-4 3.500-7 8-7M11.500 15c0-2 2-3.500 4.500-3.500" /><circle cx="14.800" cy="14" r="1.400" fill="#fff" stroke="none" /></svg>
          </TrayIcon>
          <TrayIcon $w={32} $top={17}>
            <svg width="21" height="18" viewBox="0 0 21 18" fill="none" stroke="#f0f0f0" strokeWidth="1.200"><path d="M1 6h3l4-4v14l-4-4H1zM10.500 6.500q2 2.500 0 5" /><path d="M13 4.500q4 4.500 0 9" /><path d="M15.500 2q6 7 0 14" opacity=".45" /></svg>
          </TrayIcon>
          <ImeMode>中</ImeMode>
          <TrayIcon $w={34} $top={15}><Sogou /></TrayIcon>
          <Clock>21:37<br />2019/1/5</Clock>
          <TrayIcon $w={22} $top={15}>
            <svg width="21" height="21" viewBox="0 0 21 21"><path d="M1 1h19v15.500h-7L10.500 19 8 16.500H1z" fill="none" stroke="#f4f4f4" strokeWidth="1.300" /></svg>
          </TrayIcon>
          <Edge />
        </Tray>
      </Taskbar>

      <Panel $x={1562} $y={44} $w={240} $h={216}>
        <PanelHead><Rewind /><Cross w={1.9} /></PanelHead>
        <PanelTabs $h={27}>
          <PanelTab $w={48} $on><Sort />颜色</PanelTab>
          <PanelTab $w={65}>颜色参考</PanelTab>
          <PanelMenu $pad={6}><Lines /></PanelMenu>
        </PanelTabs>
        <ColorBody>
          <ColorPair />
          <Sliders>
            {channels.map(([n, bg]) => (
              <SliderRow key={n}>
                <SliderLabel>{n}</SliderLabel>
                <SliderTrack>
                  <TrackFill $bg={bg} />
                  <TrackKnob width="9" height="9" viewBox="0 0 9 9"><path d="M4.500 0L9 4v4.500H0V4z" fill="#c4c4c4" /></TrackKnob>
                </SliderTrack>
                <NumberBox>0</NumberBox>
                <Percent>%</Percent>
              </SliderRow>
            ))}
          </Sliders>
        </ColorBody>
        <QuickSwatches><QuickSwatch $bg={NONE} /><QuickSwatch $bg="#000" /><QuickSwatch $bg="#fff" /></QuickSwatches>
        <Spectrum />
        <PanelFoot><Grip $m="1px 0 0 0" $h={4} /></PanelFoot>
      </Panel>

      <Panel $x={930} $y={469} $w={232} $h={74} $r="5px 5px 0 0">
        <PanelHead><Rewind /><Cross w={1.9} /></PanelHead>
        <PanelTabs $h={28}>
          <PanelTab $w={48} $on><Sort />描边</PanelTab>
          <PanelTab $w={53}>透明度</PanelTab>
          <PanelMenu $pad={3}><MenuBox><Lines /></MenuBox></PanelMenu>
        </PanelTabs>
        <StrokeBody>
          <StrokeLabel>粗细：</StrokeLabel>
          <StrokeField>
            <SpinBox $w={16}><Chevron up /><Chevron /></SpinBox>
            <StrokeValue>1 pt</StrokeValue>
            <SpinBox $w={16}><Chevron /></SpinBox>
          </StrokeField>
        </StrokeBody>
      </Panel>
      <Popup><PopupItem>显示选项</PopupItem></Popup>

      <Watermark>
        <WatermarkBrand>头条</WatermarkBrand>
        <WatermarkAt>@</WatermarkAt>
        阳光下的奔跑者
      </Watermark>
    </Screen>
  );
}
